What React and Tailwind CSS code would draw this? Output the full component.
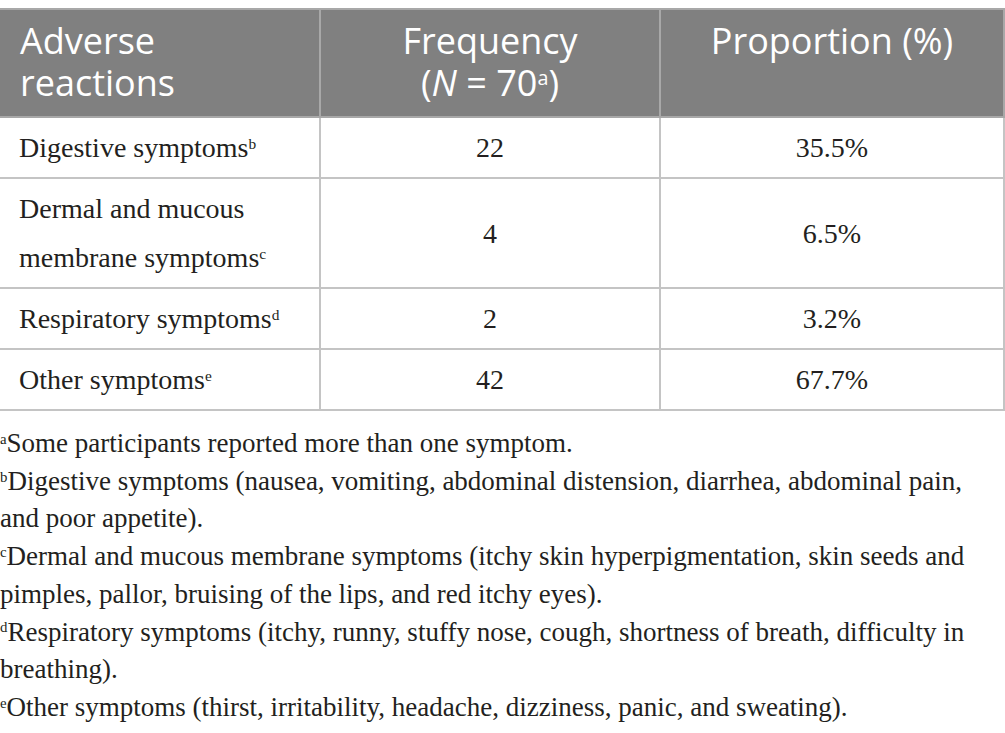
import React from 'react';

const rows = [
  { label: ['Digestive symptoms'], sup: 'b', freq: '22', pct: '35.5%' },
  { label: ['Dermal and mucous', 'membrane symptoms'], sup: 'c', freq: '4', pct: '6.5%' },
  { label: ['Respiratory symptoms'], sup: 'd', freq: '2', pct: '3.2%' },
  { label: ['Other symptoms'], sup: 'e', freq: '42', pct: '67.7%' },
];

const notes = [
  { sup: 'a', lines: ['Some participants reported more than one symptom.'] },
  {
    sup: 'b',
    lines: [
      'Digestive symptoms (nausea, vomiting, abdominal distension, diarrhea, abdominal pain,',
      'and poor appetite).',
    ],
  },
  {
    sup: 'c',
    lines: [
      'Dermal and mucous membrane symptoms (itchy skin hyperpigmentation, skin seeds and',
      'pimples, pallor, bruising of the lips, and red itchy eyes).',
    ],
  },
  {
    sup: 'd',
    lines: [
      'Respiratory symptoms (itchy, runny, stuffy nose, cough, shortness of breath, difficulty in',
      'breathing).',
    ],
  },
  { sup: 'e', lines: ['Other symptoms (thirst, irritability, headache, dizziness, panic, and sweating).'] },
];

const Sup = ({ children }) => (
  <span className="relative -top-[0.55em] text-[0.55em] leading-none">{children}</span>
);

export default function App() {
  return (
    <div className="w-[1005px] bg-white pt-2 text-[#231f20]">
      <table className="w-full border-collapse">
        <thead>
          <tr className="bg-[#808080] text-white font-['Open_Sans',sans-serif] text-[36px] leading-[42px] font-normal">
            <th className="w-[320px] border-2 border-[#a8a8a8] border-l-0 px-[20px] pt-[10px] pb-[12px] text-left align-top font-normal">
              <div>Adverse</div>
              <div>reactions</div>
            </th>
            <th className="w-[340px] border-2 border-[#a8a8a8] px-3 pt-[10px] pb-[12px] text-center align-top font-normal">
              <div>Frequency</div>
              <div>
                (<i>N</i> = 70<Sup>a</Sup>)
              </div>
            </th>
            <th className="border-2 border-[#a8a8a8] px-3 pt-[10px] pb-[12px] text-center align-top font-normal">
              Proportion (%)
            </th>
          </tr>
        </thead>
        <tbody className="font-['Liberation_Serif',serif] text-[28px] leading-[49px] text-[#231f20]">
          {rows.map((r) => (
            <tr key={r.sup}>
              <td className="border-2 border-[#c4c4c4] border-l-0 pl-[19px] pr-3 py-[5px] align-middle">
                {r.label.map((l, i) => (
                  <span key={i} className="block">
                    {l}
                    {i === r.label.length - 1 && <Sup>{r.sup}</Sup>}
                  </span>
                ))}
              </td>
              <td className="border-2 border-[#c4c4c4] px-3 py-[5px] text-center align-middle">{r.freq}</td>
              <td className="border-2 border-[#c4c4c4] px-3 py-[5px] text-center align-middle">{r.pct}</td>
            </tr>
          ))}
        </tbody>
      </table>
      <div className="mt-[14px] font-['Liberation_Serif',serif] text-[27px] leading-[37.7px] text-[#231f20]">
        {notes.map((n) => (
          <div key={n.sup}>
            {n.lines.map((l, i) => (
              <div key={i} className="whitespace-nowrap">
                {i === 0 && <Sup>{n.sup}</Sup>}
                {l}
              </div>
            ))}
          </div>
        ))}
      </div>
    </div>
  );
}
